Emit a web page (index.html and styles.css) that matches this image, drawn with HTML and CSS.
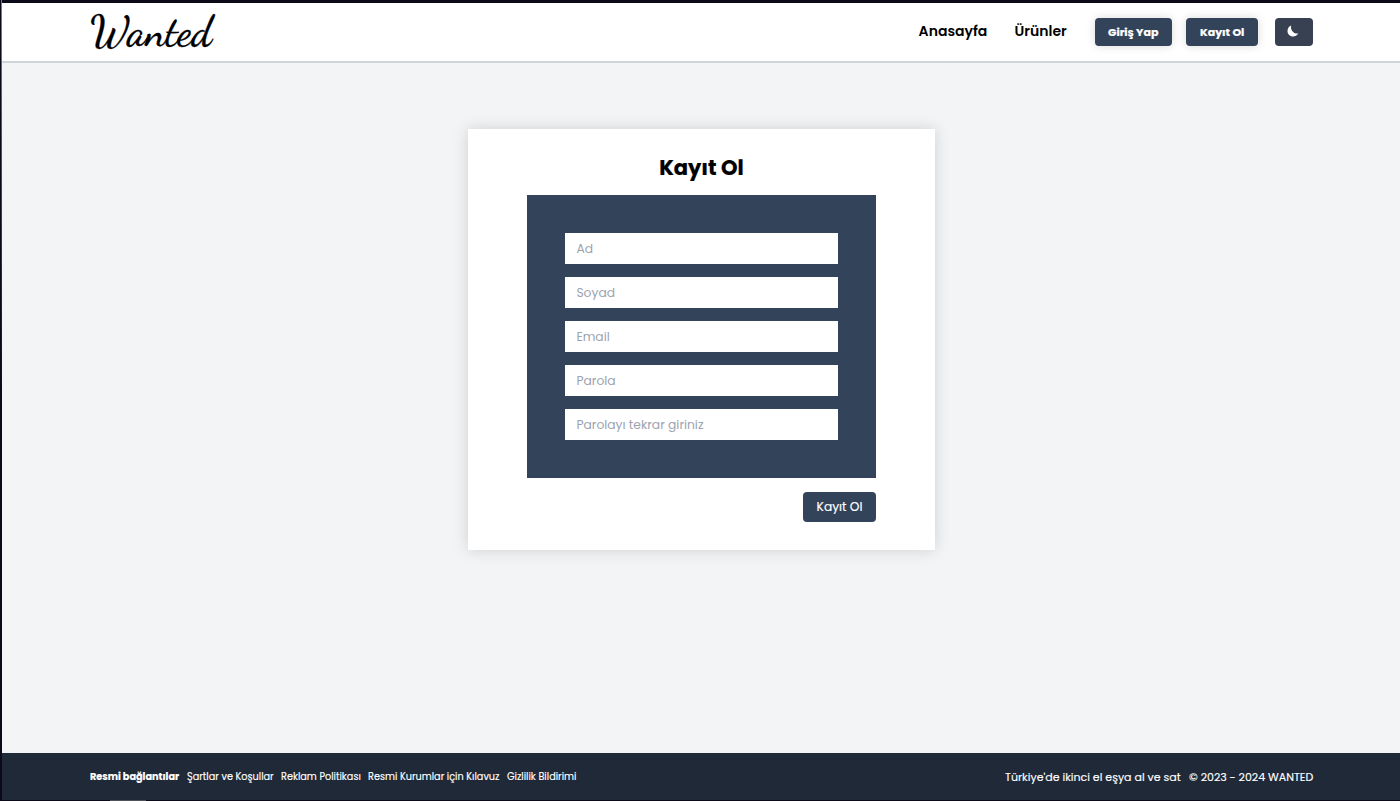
FILE: index.html
```html
<!DOCTYPE html>
<html lang="tr">
<head>
<meta charset="utf-8">
<title>Wanted</title>
<link rel="stylesheet" href="styles.css">
</head>
<body>
<div class="page">
  <header class="header">
    <a class="logo">Wanted</a>
    <nav class="nav">
      <a class="link home">Anasayfa</a>
      <a class="link products">Ürünler</a>
      <a class="btn login"><span>Giriş Yap</span></a>
      <a class="btn register"><span>Kayıt Ol</span></a>
      <button class="theme" aria-label="Tema">
        <svg width="12" height="12" viewBox="0 0 12 12"><path d="M4.200.4C3.200 4.500 6 8.900 11.200 8.500C10 10.400 8.200 11.500 6 11.500C2.900 11.500.5 9.100.5 6C.5 3.300 2 1.100 4.200.4Z" fill="#fff"/></svg>
      </button>
    </nav>
  </header>
  <main class="main">
    <section class="card">
      <h1 class="title"><span>Kayıt Ol</span></h1>
      <form class="fields">
        <input placeholder="Ad">
        <input placeholder="Soyad">
        <input placeholder="Email">
        <input placeholder="Parola">
        <input placeholder="Parolayı tekrar giriniz">
      </form>
      <button class="submit"><span>Kayıt Ol</span></button>
    </section>
  </main>
  <footer class="footer">
    <div class="group">
      <b class="f1">Resmi bağlantılar</b>
      <a class="f2">Şartlar ve Koşullar</a>
      <a class="f3">Reklam Politikası</a>
      <a class="f4">Resmi Kurumlar için Kılavuz</a>
      <a class="f5">Gizlilik Bildirimi</a>
    </div>
    <div class="group right">
      <span class="f6">Türkiye'de ikinci el eşya al ve sat</span>
      <span class="f7">© 2023 - 2024 WANTED</span>
    </div>
  </footer>
  <div class="edge-left"></div>
  <div class="edge-bottom"></div>
</div>
</body>
</html>
```
FILE: styles.css
```css
* { box-sizing: border-box; }
body { margin: 0; font-family: Poppins, Inter, sans-serif; color: #000; }
.page { position: relative; height: 801px; display: flex; flex-direction: column; background: #f3f4f6; border: solid #0b0a18; border-width: 3px 0 1px 2px; }
.header { height: 60px; flex: none; display: flex; justify-content: space-between; align-items: center; padding: 0 87px 0 88px; background: #fff; border-bottom: 2px solid #d1d5db; }
.logo { font: 500 42px/50px "Dancing Script", "Liberation Serif", cursive; white-space: nowrap; -webkit-text-stroke: .3px #000; }
.nav { display: flex; align-items: center; white-space: nowrap; }
.link { font-size: 14px; font-weight: 600; line-height: 20px; padding-bottom: 2px; }
.home { width: 96px; }
.products { width: 80.4px; }
.btn { height: 28px; border-radius: 4px; background: #334359; color: #fff; font-size: 11px; font-weight: 700; line-height: 28px; box-shadow: 0 0 10px rgba(0,0,0,.15); padding-left: 13px; -webkit-text-stroke: .2px #fff; }
.login { width: 77px; margin-right: 14px; }
.register { width: 72px; margin-right: 17px; padding-left: 14px; }
.theme { width: 38px; height: 28px; border: 0; border-radius: 4px; background: #374151; padding: 0 2px 2px 0; display: flex; align-items: center; justify-content: center; }
.main { flex: 1; padding-top: 66px; }
.card { width: 467px; height: 421px; margin-left: 466px; padding: 25px 59px 28px; background: #fff; box-shadow: 0 0 15px rgba(0,0,0,.15); display: flex; flex-direction: column; }
.title { margin: 0 0 13px; font-size: 21px; line-height: 28px; font-weight: 700; text-align: center; white-space: nowrap; -webkit-text-stroke: .2px #000; }
.fields { height: 283px; padding: 38px; background: #334359; display: flex; flex-direction: column; gap: 13px; }
.fields input { width: 273px; height: 31px; border: 0; padding: 0 11.4px; font: 12.3px Poppins, Inter, sans-serif; background: #fff; outline: 0; }
.fields input::placeholder { color: #9ca3af; opacity: 1; }
.submit { align-self: flex-end; width: 73px; height: 30px; margin-top: 14px; border: 0; border-radius: 4px; padding: 0; background: #334359; color: #fff; font: 12.25px Poppins, Inter, sans-serif; white-space: nowrap; -webkit-text-stroke: .15px #fff; }
.footer { height: 47px; flex: none; display: flex; justify-content: space-between; align-items: center; padding: 0 87px 0 88px; background: #1f2937; color: #fff; font-size: 9.7px; line-height: 16px; white-space: nowrap; -webkit-text-stroke: .15px #fff; }
.group { display: flex; }
.group.right { font-size: 11px; }
.f1 { width: 97px; }
.f2 { width: 94px; }
.f3 { width: 87px; }
.f4 { width: 139px; }
.f5 { width: 69px; }
.f6 { width: 184px; }
.f7 { width: 124px; }
/* Window frame highlights */
.edge-left { position: absolute; left: -1px; top: -3px; width: 1px; height: 400px; background: linear-gradient(#9266c8, #6f4a9c 25%, #0b0a18); }
.edge-bottom { position: absolute; left: 108px; bottom: -1px; width: 36px; height: 1px; background: #50525a; }
```
